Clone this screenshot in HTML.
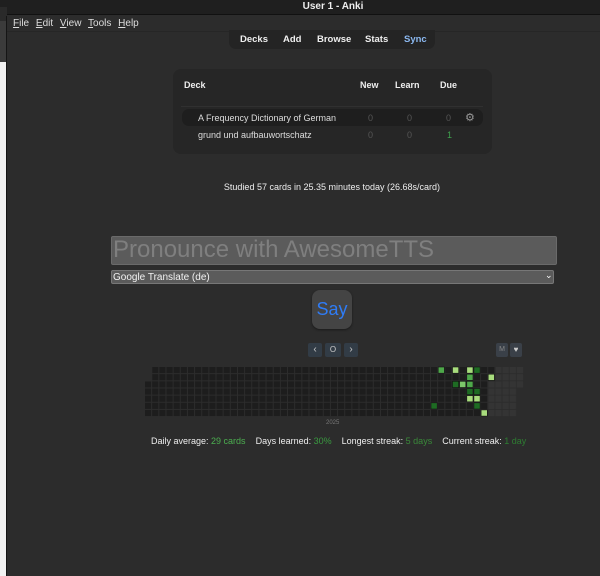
<!DOCTYPE html>
<html><head><meta charset="utf-8"><style>
*{margin:0;padding:0;box-sizing:border-box}
body{width:600px;height:576px;background:#2c2c2c;font-family:"Liberation Sans","DejaVu Sans",sans-serif;color:#ddd;position:relative;overflow:hidden}
.a{position:absolute;white-space:nowrap}
.b{font-weight:bold}
</style></head><body>
<div class="a" style="left:0;top:0;width:600px;height:15px;background:#1f1f1f;border-bottom:1px solid #111"></div>
<div class="a b" style="left:0;width:600px;top:1px;text-align:center;font-size:10px;color:#eee;padding-left:66px">User 1 - Anki</div>
<div class="a" style="left:0;top:7px;width:7px;height:14px;background:#2a2a2a"></div>
<div class="a" style="left:0;top:21px;width:7px;height:41px;background:#3b3b3b"></div>
<div class="a" style="left:0;top:62px;width:6px;height:514px;background:#f2f2f2"></div>
<div class="a" style="left:6px;top:16px;width:1px;height:560px;background:#151515"></div>
<div class="a" style="left:13px;top:18px;font-size:10px;color:#ddd;word-spacing:4px"><u>F</u>ile <u>E</u>dit <u>V</u>iew <u>T</u>ools <u>H</u>elp</div>
<div class="a" style="left:7px;top:31px;width:593px;height:1px;background:#262626"></div>
<div class="a" style="left:229px;top:30px;width:206px;height:19px;background:#242424;border-radius:0 0 7px 7px"></div>
<div class="a b" style="left:240px;top:34px;font-size:9.5px;color:#eee">Decks</div>
<div class="a b" style="left:283px;top:34px;font-size:9.5px;color:#eee">Add</div>
<div class="a b" style="left:317px;top:34px;font-size:9.5px;color:#eee">Browse</div>
<div class="a b" style="left:365px;top:34px;font-size:9.5px;color:#eee">Stats</div>
<div class="a b" style="left:404px;top:34px;font-size:9.5px;color:#8bb8f0">Sync</div>

<div class="a" style="left:173px;top:69px;width:319px;height:85px;background:#262626;border-radius:8px"></div>
<div class="a b" style="left:184px;top:80px;font-size:9px;color:#eee">Deck</div>
<div class="a b" style="left:360px;top:80px;font-size:9px;color:#eee">New</div>
<div class="a b" style="left:395px;top:80px;font-size:9px;color:#eee">Learn</div>
<div class="a b" style="left:440px;top:80px;font-size:9px;color:#eee">Due</div>
<div class="a" style="left:181px;top:106px;width:302px;height:1px;background:#303030"></div>
<div class="a" style="left:182px;top:109px;width:301px;height:17px;background:#1e1e1e;border-radius:7px"></div>
<div class="a" style="left:198px;top:113px;font-size:9px;color:#ddd">A Frequency Dictionary of German</div>
<div class="a" style="left:368px;top:113px;font-size:9px;color:#555">0</div>
<div class="a" style="left:407px;top:113px;font-size:9px;color:#555">0</div>
<div class="a" style="left:446px;top:113px;font-size:9px;color:#555">0</div>
<div class="a" style="left:465px;top:111px;font-size:11px;color:#999">&#9881;</div>
<div class="a" style="left:198px;top:130px;font-size:9px;color:#ddd">grund und aufbauwortschatz</div>
<div class="a" style="left:368px;top:130px;font-size:9px;color:#555">0</div>
<div class="a" style="left:407px;top:130px;font-size:9px;color:#555">0</div>
<div class="a" style="left:447px;top:130px;font-size:9px;color:#3fa34d">1</div>

<div class="a" style="left:0;width:600px;top:182px;text-align:center;font-size:9px;color:#eee;padding-left:64px">Studied 57 cards in 25.35 minutes today (26.68s/card)</div>

<div class="a" style="left:111px;top:236px;width:446px;height:29px;background:#5b5b5b;border:1px solid #6a6a6a;border-radius:2px"></div>
<div class="a" style="left:113px;top:236px;font-size:24px;color:#7f7f7f;line-height:28px">Pronounce with AwesomeTTS</div>
<div class="a" style="left:111px;top:270px;width:443px;height:14px;background:#5b5b5b;border:1px solid #777;border-radius:2px"></div>
<div class="a" style="left:113px;top:271px;font-size:10px;color:#f2f2f2;line-height:13px">Google Translate (de)</div>
<div class="a" style="left:545px;top:270px;font-size:9px;color:#fff">&#8964;</div>
<div class="a" style="left:312px;top:290px;width:40px;height:39px;background:#444;border-radius:8px;box-shadow:0 1px 2px #1a1a1a"></div>
<div class="a" style="left:312px;width:40px;top:299px;text-align:center;font-size:18px;color:#2f7cf6">Say</div>

<div class="a" style="left:308px;top:343px;width:14px;height:14px;background:#323c46;border-radius:2px;color:#ccc;font-size:10px;text-align:center;line-height:13px">&#8249;</div>
<div class="a" style="left:325px;top:343px;width:16px;height:14px;background:#323c46;border-radius:2px;color:#ccc;font-size:8px;text-align:center;line-height:14px">O</div>
<div class="a" style="left:344px;top:343px;width:14px;height:14px;background:#323c46;border-radius:2px;color:#ccc;font-size:10px;text-align:center;line-height:13px">&#8250;</div>
<div class="a" style="left:496px;top:343px;width:12px;height:14px;background:#3a4048;border-radius:2px;color:#888;font-size:7px;text-align:center;line-height:14px">M</div>
<div class="a" style="left:510px;top:343px;width:12px;height:14px;background:#3a4048;border-radius:2px;color:#ccc;font-size:8px;text-align:center;line-height:14px">&#9829;</div>

<svg class="a" style="left:0;top:0" width="600" height="576">
<defs>
<pattern id="p" x="145" y="367" width="7.15" height="7.15" patternUnits="userSpaceOnUse"><rect width="6.2" height="6.2" fill="#1d1d1d"/></pattern>
<pattern id="f" x="145" y="367" width="7.15" height="7.15" patternUnits="userSpaceOnUse"><rect width="6.2" height="6.2" fill="#343434"/></pattern>
</defs>
<rect x="152.15" y="367" width="350.4" height="14.3" fill="url(#p)"/>
<rect x="145" y="381.3" width="343.2" height="35.75" fill="url(#p)"/>
<rect x="495.35" y="367" width="28.6" height="14.3" fill="url(#f)"/>
<rect x="488.2" y="381.3" width="35.75" height="7.15" fill="url(#f)"/>
<rect x="488.2" y="388.45" width="28.6" height="28.6" fill="url(#f)"/>
<g stroke="#111" stroke-width="0.6">
<rect x="438.2" y="367" width="6.2" height="6.2" fill="#4ea84a"/>
<rect x="452.5" y="367" width="6.2" height="6.2" fill="#a8dc7d"/>
<rect x="466.8" y="367" width="6.2" height="6.2" fill="#a8dc7d"/>
<rect x="473.9" y="367" width="6.2" height="6.2" fill="#1e6b23"/>
<rect x="466.8" y="374.2" width="6.2" height="6.2" fill="#4ea84a"/>
<rect x="488.2" y="374.2" width="6.2" height="6.2" fill="#a8dc7d"/>
<rect x="452.5" y="381.3" width="6.2" height="6.2" fill="#1e6b23"/>
<rect x="459.6" y="381.3" width="6.2" height="6.2" fill="#7cc66a"/>
<rect x="466.8" y="381.3" width="6.2" height="6.2" fill="#4ea84a"/>
<rect x="466.8" y="388.5" width="6.2" height="6.2" fill="#1e6b23"/>
<rect x="473.9" y="388.5" width="6.2" height="6.2" fill="#1e6b23"/>
<rect x="466.8" y="395.6" width="6.2" height="6.2" fill="#a8dc7d"/>
<rect x="473.9" y="395.6" width="6.2" height="6.2" fill="#a8dc7d"/>
<rect x="431" y="402.8" width="6.2" height="6.2" fill="#1e6b23"/>
<rect x="473.9" y="402.8" width="6.2" height="6.2" fill="#1e6b23"/>
<rect x="481.1" y="409.9" width="6.2" height="6.2" fill="#a8dc7d"/>
</g>
</svg>
<div class="a" style="left:326px;top:420px;font-size:6px;color:#777">2025</div>
<div class="a" style="left:151px;top:436px;font-size:9px;color:#eee">Daily average: <span style="color:#4caf50">29 cards</span>&nbsp;&nbsp;&nbsp; Days learned: <span style="color:#3a9a40">30%</span>&nbsp;&nbsp;&nbsp; Longest streak: <span style="color:#3a8a3a">5 days</span>&nbsp;&nbsp;&nbsp; Current streak: <span style="color:#2e7d32">1 day</span></div>
</body></html>
